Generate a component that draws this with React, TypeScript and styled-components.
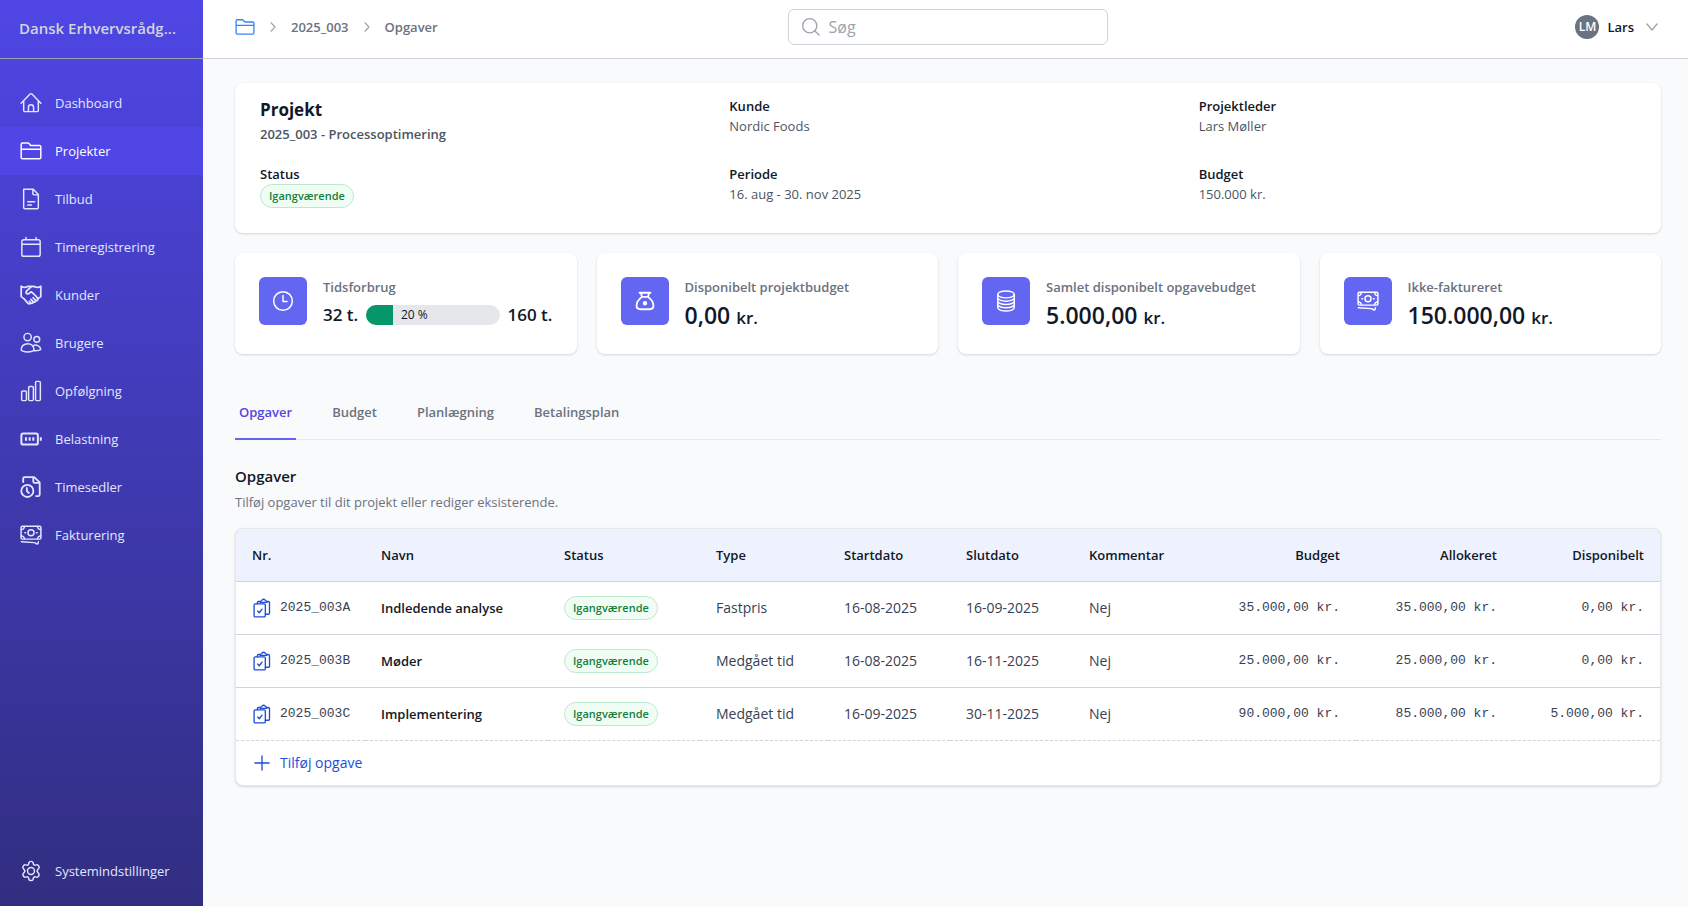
import React from 'react';
import styled, { createGlobalStyle, css } from 'styled-components';

const GlobalStyle = createGlobalStyle`
  *, *::before, *::after { box-sizing: border-box; }
  body {
    margin: 0;
    background: #f9fafb;
    color: #111827;
    font-family: 'Open Sans', 'Noto Sans', sans-serif;
    font-size: 13px;
    line-height: 20px;
  }
  h1, h2, p, dl, dd, ul { margin: 0; padding: 0; }
  ul { list-style: none; }
  a { color: inherit; text-decoration: none; }
  button { font: inherit; color: inherit; background: none; border: 0; padding: 0; cursor: pointer; }
`;

/* ---------- icons ---------- */

const Svg = styled.svg<{ $size: number }>`
  width: ${(p) => p.$size}px;
  height: ${(p) => p.$size}px;
  flex: none;
  fill: none;
  stroke: currentColor;
  stroke-width: 1.6;
  stroke-linecap: round;
  stroke-linejoin: round;
`;

const paths = {
  home: (
    <path d="M1.200 12.200 11 2.200a1.400 1.400 0 0 1 2 0l9.800 10M4 9.800v10.400c0 .7.5 1.200 1.200 1.200h13.600c.7 0 1.200-.5 1.200-1.200V9.800M9.200 21.400v-4.600a2.800 2.800 0 0 1 5.600 0v4.600" />
  ),
  folder: (
    <path d="M1.300 19V4.800c0-.8.7-1.500 1.500-1.500h5.800c.5 0 1 .2 1.300.6l1.200 1.500c.3.4.7.6 1.200.6h8.900c.8 0 1.500.7 1.500 1.500V19c0 .8-.7 1.500-1.500 1.500H2.800c-.8 0-1.500-.7-1.500-1.500ZM1.300 10h21.400" />
  ),
  document: (
    <path d="M4 1.300h10.500L20 7v14.200c0 .8-.7 1.500-1.500 1.500h-13c-.8 0-1.500-.7-1.500-1.500V1.300ZM14 1.300V6c0 .8.7 1.500 1.500 1.500H20M8.500 15H16M8.500 18.500h4" />
  ),
  calendar: (
    <path d="M4 4.200h16a2 2 0 0 1 2 2v14a2 2 0 0 1-2 2H4a2 2 0 0 1-2-2v-14a2 2 0 0 1 2-2ZM2 9h20M6.500 1.500v2.700M17.500 1.500v2.700" />
  ),
  handshake: (
    <path
      strokeWidth="1.900"
      d="M1.300 2.500c2.200 1.500 4.500 1.400 7 .2h7.400c2.500 1.200 4.800 1.300 7-.2v11.300l-3.300 2.200M1.300 2.500v11.300l3.200 2.400 4.300 4.900c1 .9 2.400.6 2.900-.4 1.300.8 2.600.2 2.900-1 1.300.4 2.500-.3 2.600-1.500 1.500.2 2.700-1 2.100-2.300-.9-1.800-3.900-4.600-5.300-6M16.500 3.200c-2-.8-4-.5-5.300.7L7.300 7.600c-1 1-.9 2.200 0 2.800 1 .7 2.200.4 3-.4l1.900-1.500 1.800 1.400M14.600 19.700 12 16.700M17.200 18.200 14.300 15M11.700 20.700l-1.500-1.800"
    />
  ),
  users: (
    <g>
      <circle cx="8.300" cy="5.500" r="4" />
      <path d="M1.300 19.500c0-4 3-6.800 7-6.800s7 2.800 7 6.800c-1.700 3-12.300 3-14 0Z" />
      <circle cx="18.300" cy="8" r="3.200" />
      <path d="M14 15.300c3.500-2.600 8.300.2 8.700 3.800-1.300 1.200-4.200 1.500-7.400 1.300" />
    </g>
  ),
  bars: (
    <g>
      <rect x="1.800" y="12" width="5.200" height="10.500" rx="1.200" />
      <rect x="9.400" y="7" width="5.200" height="15.500" rx="1.200" />
      <rect x="17" y="1.500" width="5.200" height="21" rx="1.200" />
    </g>
  ),
  battery: (
    <g strokeWidth="2.200" strokeLinecap="butt">
      <rect x="1.500" y="6" width="18" height="12" rx="2" />
      <path d="M6.500 10v4M10.500 10v4M14.500 10v4M22.700 10v4" />
    </g>
  ),
  timesheet: (
    <g strokeWidth="2">
      <circle cx="8" cy="16.300" r="6.600" />
      <path d="M7.500 13v3.500l2.200 2M3.500 6.500V2.800c0-.8.700-1.500 1.500-1.500h10.500L21.500 7v13.200c0 1-.7 1.700-1.500 1.700h-2.500M14.500 1.300V6c0 .8.700 1.500 1.500 1.500h5.500" />
    </g>
  ),
  cash: (
    <g>
      <rect x="1.200" y="2.500" width="21.600" height="14" rx="1.200" />
      <circle cx="12" cy="9.500" r="3.300" />
      <path d="M1.500 6a3.200 3.200 0 0 0 3.300-3.200M22.500 6a3.200 3.200 0 0 1-3.300-3.200M1.500 13a3.200 3.200 0 0 1 3.300 3.200M22.500 13a3.200 3.200 0 0 0-3.300 3.200M5.300 9.500h.8M17.900 9.500h.8M1.500 19.300l14 1c1.800.1 1.700 1.500 3.300 1.500 1.200 0 1.200-1.300 1.200-2.500" />
    </g>
  ),
  gear: (
    <g>
      <circle cx="12" cy="12" r="3.800" />
      <path d="M9.700 3c.5-2 4.100-2 4.600 0l.3 1.400c.3.900 1.200 1.400 2.100 1.200l1.300-.3c2-.5 3.800 2.500 2.400 4l-.9 1.100a2.300 2.300 0 0 0 0 3.200l.9 1.100c1.400 1.500-.4 4.500-2.400 4l-1.300-.3c-.9-.2-1.800.3-2.100 1.200l-.3 1.400c-.5 2-4.100 2-4.600 0l-.3-1.400c-.3-.9-1.200-1.400-2.100-1.200l-1.300.3c-2 .5-3.800-2.500-2.400-4l.9-1.100a2.300 2.300 0 0 0 0-3.200l-.9-1.100c-1.400-1.500.4-4.500 2.400-4l1.300.3c.9.200 1.800-.3 2.100-1.200Z" />
    </g>
  ),
  clock: (
    <g>
      <circle cx="12" cy="12" r="10.200" />
      <path d="M12 6v6.500h4.500" />
    </g>
  ),
  moneybag: (
    <g strokeWidth="2">
      <path d="M6 3h12M7.500 3l1.200 4.500h6.600L16.500 3M8.700 7.500C6 9.500 2.800 12.500 2.800 17c0 3 1.900 4 3.900 4h10.600c2 0 3.900-1 3.900-4 0-4.500-3.200-7.500-5.900-9.500" />
      <circle cx="12" cy="14.500" r="1.400" fill="currentColor" />
    </g>
  ),
  coins: (
    <g>
      <ellipse cx="12" cy="4.800" rx="9" ry="3.800" />
      <path d="M3 4.800v14.400C3 21.300 7 23 12 23s9-1.700 9-3.800V4.800M3 8.400c0 2.100 4 3.800 9 3.800s9-1.700 9-3.800M3 12c0 2.100 4 3.800 9 3.800s9-1.700 9-3.800M3 15.600c0 2.100 4 3.800 9 3.800s9-1.700 9-3.800" />
    </g>
  ),
  tasks: (
    <g>
      <rect x="2.500" y="7" width="13.500" height="15.700" rx="1.500" />
      <path d="M6.500 7V5.500c0-.8.600-1.300 1.300-1.300h2M18 4.200h1.700c.7 0 1.300.5 1.300 1.300v12.700c0 .8-.6 1.300-1.300 1.300H16M9.800 5.200h8.200c0-1.400-.8-2-1.900-2.100a2.300 2.300 0 0 0-4.400 0c-1.100.1-1.900.7-1.900 2.100ZM6.800 15.700l1.900 2 3.300-4.400" />
    </g>
  ),
  plus: <path d="M12 3.500v17M3.500 12h17" />,
  search: (
    <g>
      <circle cx="10.500" cy="10.500" r="8.500" />
      <path d="m16.700 16.700 5 5" />
    </g>
  ),
  right: <path strokeWidth="2.200" d="m8 3.500 8 8.500-8 8.500" />,
  down: <path strokeWidth="2" d="m4.500 7.500 7.500 9 7.500-9" />,
};

type IconName = keyof typeof paths;

const Icon = ({ name, size = 24 }: { name: IconName; size?: number }) => (
  <Svg $size={size} viewBox="0 0 24 24" aria-hidden="true">
    {paths[name]}
  </Svg>
);

/* ---------- shell ---------- */

const Shell = styled.div`
  display: grid;
  grid-template-columns: 203px minmax(0, 1fr);
  min-height: 100vh;
`;

const Sidebar = styled.aside`
  display: flex;
  flex-direction: column;
  padding-bottom: 11px;
  background: linear-gradient(to bottom, #4f46e5, #312e81);
  color: #e0e7ff;
`;

const Brand = styled.a`
  display: block;
  height: 59px;
  padding: 0 19px;
  border-bottom: 1px solid #9ca3af;
  color: #d1d5db;
  font-size: 15px;
  font-weight: 600;
  line-height: 56px;
  white-space: nowrap;
`;

const Nav = styled.nav`
  flex: 1;
  display: flex;
  flex-direction: column;
  justify-content: space-between;
  padding-top: 20px;
`;

const NavLink = styled.a<{ $active?: boolean }>`
  display: flex;
  align-items: center;
  gap: 13px;
  height: 48px;
  padding: 0 20px;
  ${(p) =>
    p.$active &&
    css`
      background: #4f46e5;
      color: #ffffff;
    `}
`;

const Page = styled.div`
  display: flex;
  flex-direction: column;
`;

const TopBar = styled.header`
  display: grid;
  grid-template-columns: 1fr 320px 1fr;
  align-items: center;
  height: 59px;
  padding: 0 28px 4px 32px;
  background: #ffffff;
  border-bottom: 1px solid #d1d5db;
`;

const Crumbs = styled.nav`
  display: flex;
  align-items: center;
  gap: 12px;
  color: #6b7280;
  font-weight: 600;
`;

const CrumbFolder = styled.a`
  display: flex;
  color: #3b82f6;
`;

const CrumbArrow = styled.span`
  display: flex;
  color: #9ca3af;
`;

const SearchBox = styled.label`
  display: flex;
  align-items: center;
  gap: 8px;
  height: 36px;
  padding: 0 12px;
  border: 1px solid #d1d5db;
  border-radius: 6px;
  background: #ffffff;
  color: #9ca3af;
`;

const SearchInput = styled.input`
  flex: 1;
  min-width: 0;
  border: 0;
  padding: 0;
  outline: 0;
  background: none;
  color: #111827;
  font: inherit;
  font-size: 16px;
  &::placeholder { color: #9ca3af; opacity: 1; }
`;

const UserButton = styled.button`
  display: flex;
  align-items: center;
  justify-self: end;
  gap: 8px;
  font-weight: 600;
`;

const Avatar = styled.span`
  display: grid;
  place-items: center;
  width: 24px;
  height: 24px;
  border-radius: 50%;
  background: #6b7280;
  color: #ffffff;
  font-size: 12px;
`;

const UserArrow = styled.span`
  display: flex;
  padding-left: 2px;
  color: #9ca3af;
`;

const Content = styled.main`
  padding: 24px 27px 24px 32px;
`;

/* ---------- cards ---------- */

const Card = styled.section`
  border-radius: 8px;
  background: #ffffff;
  box-shadow: 0 1px 3px rgba(0, 0, 0, 0.1), 0 1px 2px rgba(0, 0, 0, 0.06);
`;

const ProjectCard = styled(Card)`
  display: grid;
  grid-template-columns: repeat(3, minmax(0, 1fr));
  gap: 20px 32px;
  padding: 13px 25px 25px;
`;

const ProjectTitle = styled.h1`
  font-size: 17px;
  font-weight: 700;
  line-height: 28px;
`;

const ProjectName = styled.p`
  color: #4b5563;
  font-weight: 600;
`;

const Field = styled.div`
  color: #4b5563;
`;

const FieldLabel = styled.h2`
  color: #111827;
  font-size: 13px;
  font-weight: 600;
`;

const Badge = styled.span`
  display: inline-flex;
  align-items: center;
  height: 24px;
  padding: 0 8px;
  border: 1px solid #bfe9ce;
  border-radius: 12px;
  background: #f0fdf4;
  color: #15803d;
  font-size: 11px;
  font-weight: 600;
  line-height: 16px;
`;

const Stats = styled.div`
  display: grid;
  grid-template-columns: repeat(4, minmax(0, 1fr));
  gap: 20px;
  margin-top: 20px;
`;

const StatCard = styled(Card)`
  display: flex;
  align-items: flex-start;
  gap: 16px;
  padding: 24px 24px 23px;
`;

const StatIcon = styled.span`
  display: grid;
  place-items: center;
  flex: none;
  width: 48px;
  height: 48px;
  border-radius: 6px;
  background: #6366f1;
  color: #ffffff;
`;

const StatBody = styled.div`
  flex: 1;
  min-width: 0;
`;

const StatLabel = styled.p`
  color: #6b7280;
  font-weight: 600;
  white-space: nowrap;
`;

const StatValue = styled.p`
  margin-top: 2px;
  font-size: 23px;
  font-weight: 600;
  line-height: 32px;
`;

const Unit = styled.span`
  font-size: 17px;
  line-height: 20px;
`;

const Usage = styled.div`
  display: flex;
  align-items: center;
  gap: 8px;
  margin-top: 2px;
  font-size: 17px;
  font-weight: 600;
  line-height: 32px;
  white-space: nowrap;
`;

const Bar = styled.div`
  flex: 1;
  display: flex;
  align-items: center;
  height: 20px;
  border-radius: 10px;
  overflow: hidden;
  background: #e5e7eb;
  font-size: 12px;
  font-weight: 500;
  line-height: 20px;
`;

const BarFill = styled.span`
  align-self: stretch;
  margin-right: 8px;
  background: #059669;
`;

/* ---------- tabs and table ---------- */

const Tabs = styled.nav`
  display: flex;
  gap: 32px;
  margin-top: 32px;
  border-bottom: 1px solid #e5e7eb;
`;

const Tab = styled.a<{ $active?: boolean }>`
  margin-bottom: -1px;
  padding: 16px 4px;
  border-bottom: 2px solid ${(p) => (p.$active ? '#6366f1' : 'transparent')};
  color: ${(p) => (p.$active ? '#4f46e5' : '#6b7280')};
  font-weight: 600;
`;

const SectionTitle = styled.h2`
  margin-top: 24px;
  font-size: 15px;
  font-weight: 600;
  line-height: 24px;
`;

const SectionText = styled.p`
  margin-top: 4px;
  color: #6b7280;
`;

const TableCard = styled(Card)`
  margin-top: 16px;
  border: 1px solid #e5e7eb;
  overflow: hidden;
`;

const Table = styled.table`
  width: 100%;
  table-layout: fixed;
  border-collapse: separate;
  border-spacing: 0;
`;

const Th = styled.th<{ $right?: boolean }>`
  height: 53px;
  padding: 0 16px;
  border-bottom: 1px solid #d1d5db;
  background: #eef2ff;
  font-weight: 600;
  text-align: ${(p) => (p.$right ? 'right' : 'left')};
`;

const mono = css`
  font-family: 'Liberation Mono', monospace;
  font-size: 13px;
`;

const Td = styled.td<{ $money?: boolean; $strong?: boolean }>`
  height: 53px;
  padding: 0 16px;
  border-bottom: 1px solid #d1d5db;
  color: #374151;
  font-size: 14px;
  white-space: nowrap;
  tbody tr:last-child & { border-bottom-style: dashed; }
  ${(p) => p.$strong && css`color: #111827; font-size: 13px; font-weight: 600;`}
  ${(p) => p.$money && css`${mono} text-align: right;`}
`;

const TaskLink = styled.a`
  display: flex;
  align-items: center;
  gap: 8px;
  ${mono}
  svg { color: #1d4ed8; }
`;

const AddButton = styled.button`
  display: flex;
  align-items: center;
  gap: 8px;
  height: 44px;
  padding: 0 16px;
  color: #1d4ed8;
  font-size: 14px;
`;

/* ---------- data ---------- */

const navItems: { icon: IconName; label: string }[] = [
  { icon: 'home', label: 'Dashboard' },
  { icon: 'folder', label: 'Projekter' },
  { icon: 'document', label: 'Tilbud' },
  { icon: 'calendar', label: 'Timeregistrering' },
  { icon: 'handshake', label: 'Kunder' },
  { icon: 'users', label: 'Brugere' },
  { icon: 'bars', label: 'Opfølgning' },
  { icon: 'battery', label: 'Belastning' },
  { icon: 'timesheet', label: 'Timesedler' },
  { icon: 'cash', label: 'Fakturering' },
];

const stats: { icon: IconName; label: string; value: string }[] = [
  { icon: 'moneybag', label: 'Disponibelt projektbudget', value: '0,00' },
  { icon: 'coins', label: 'Samlet disponibelt opgavebudget', value: '5.000,00' },
  { icon: 'cash', label: 'Ikke-faktureret', value: '150.000,00' },
];

const columns = [
  { label: 'Nr.', width: 129 },
  { label: 'Navn', width: 183 },
  { label: 'Status', width: 152 },
  { label: 'Type', width: 128 },
  { label: 'Startdato', width: 122 },
  { label: 'Slutdato', width: 123 },
  { label: 'Kommentar', width: 127 },
  { label: 'Budget', width: 156, right: true },
  { label: 'Allokeret', width: 157, right: true },
  { label: 'Disponibelt', width: 147, right: true },
];

const tasks = [
  { nr: '2025_003A', name: 'Indledende analyse', type: 'Fastpris', start: '16-08-2025', end: '16-09-2025', money: ['35.000,00 kr.', '35.000,00 kr.', '0,00 kr.'] },
  { nr: '2025_003B', name: 'Møder', type: 'Medgået tid', start: '16-08-2025', end: '16-11-2025', money: ['25.000,00 kr.', '25.000,00 kr.', '0,00 kr.'] },
  { nr: '2025_003C', name: 'Implementering', type: 'Medgået tid', start: '16-09-2025', end: '30-11-2025', money: ['90.000,00 kr.', '85.000,00 kr.', '5.000,00 kr.'] },
];

const usedPercent = 20;

export default function App() {
  return (
    <Shell>
      <GlobalStyle />
      <Sidebar>
        <Brand href="#">Dansk Erhvervsrådg...</Brand>
        <Nav aria-label="Hovedmenu">
          <ul>
            {navItems.map((item) => (
              <li key={item.label}>
                <NavLink href="#" $active={item.label === 'Projekter'}>
                  <Icon name={item.icon} size={22} />
                  {item.label}
                </NavLink>
              </li>
            ))}
          </ul>
          <NavLink href="#">
            <Icon name="gear" size={22} />
            Systemindstillinger
          </NavLink>
        </Nav>
      </Sidebar>

      <Page>
        <TopBar>
          <Crumbs aria-label="Brødkrumme">
            <CrumbFolder href="#" aria-label="Projekter">
              <Icon name="folder" size={20} />
            </CrumbFolder>
            <CrumbArrow><Icon name="right" size={12} /></CrumbArrow>
            <a href="#">2025_003</a>
            <CrumbArrow><Icon name="right" size={12} /></CrumbArrow>
            <a href="#">Opgaver</a>
          </Crumbs>
          <SearchBox>
            <Icon name="search" size={20} />
            <SearchInput type="search" placeholder="Søg" aria-label="Søg" />
          </SearchBox>
          <UserButton type="button">
            <Avatar>LM</Avatar>
            Lars
            <UserArrow><Icon name="down" size={16} /></UserArrow>
          </UserButton>
        </TopBar>

        <Content>
          <ProjectCard>
            <div>
              <ProjectTitle>Projekt</ProjectTitle>
              <ProjectName>2025_003 - Processoptimering</ProjectName>
            </div>
            <Field><FieldLabel>Kunde</FieldLabel>Nordic Foods</Field>
            <Field><FieldLabel>Projektleder</FieldLabel>Lars Møller</Field>
            <Field><FieldLabel>Status</FieldLabel><Badge>Igangværende</Badge></Field>
            <Field><FieldLabel>Periode</FieldLabel>16. aug - 30. nov 2025</Field>
            <Field><FieldLabel>Budget</FieldLabel>150.000 kr.</Field>
          </ProjectCard>

          <Stats>
            <StatCard>
              <StatIcon><Icon name="clock" size={22} /></StatIcon>
              <StatBody>
                <StatLabel>Tidsforbrug</StatLabel>
                <Usage>
                  32 t.
                  <Bar>
                    <BarFill style={{ width: `${usedPercent}%` }} />
                    {usedPercent} %
                  </Bar>
                  160 t.
                </Usage>
              </StatBody>
            </StatCard>
            {stats.map((s) => (
              <StatCard key={s.label}>
                <StatIcon><Icon name={s.icon} size={22} /></StatIcon>
                <StatBody>
                  <StatLabel>{s.label}</StatLabel>
                  <StatValue>{s.value} <Unit>kr.</Unit></StatValue>
                </StatBody>
              </StatCard>
            ))}
          </Stats>

          <Tabs aria-label="Projektfaner">
            {['Opgaver', 'Budget', 'Planlægning', 'Betalingsplan'].map((t) => (
              <Tab key={t} href="#" $active={t === 'Opgaver'}>{t}</Tab>
            ))}
          </Tabs>

          <SectionTitle>Opgaver</SectionTitle>
          <SectionText>Tilføj opgaver til dit projekt eller rediger eksisterende.</SectionText>

          <TableCard>
            <Table>
              <colgroup>
                {columns.map((c) => <col key={c.label} width={c.width} />)}
              </colgroup>
              <thead>
                <tr>
                  {columns.map((c) => <Th key={c.label} scope="col" $right={c.right}>{c.label}</Th>)}
                </tr>
              </thead>
              <tbody>
                {tasks.map((t) => (
                  <tr key={t.nr}>
                    <Td><TaskLink href="#"><Icon name="tasks" size={20} />{t.nr}</TaskLink></Td>
                    <Td $strong>{t.name}</Td>
                    <Td><Badge>Igangværende</Badge></Td>
                    <Td>{t.type}</Td>
                    <Td>{t.start}</Td>
                    <Td>{t.end}</Td>
                    <Td>Nej</Td>
                    {t.money.map((m, i) => <Td key={i} $money>{m}</Td>)}
                  </tr>
                ))}
              </tbody>
            </Table>
            <AddButton type="button"><Icon name="plus" size={20} />Tilføj opgave</AddButton>
          </TableCard>
        </Content>
      </Page>
    </Shell>
  );
}
